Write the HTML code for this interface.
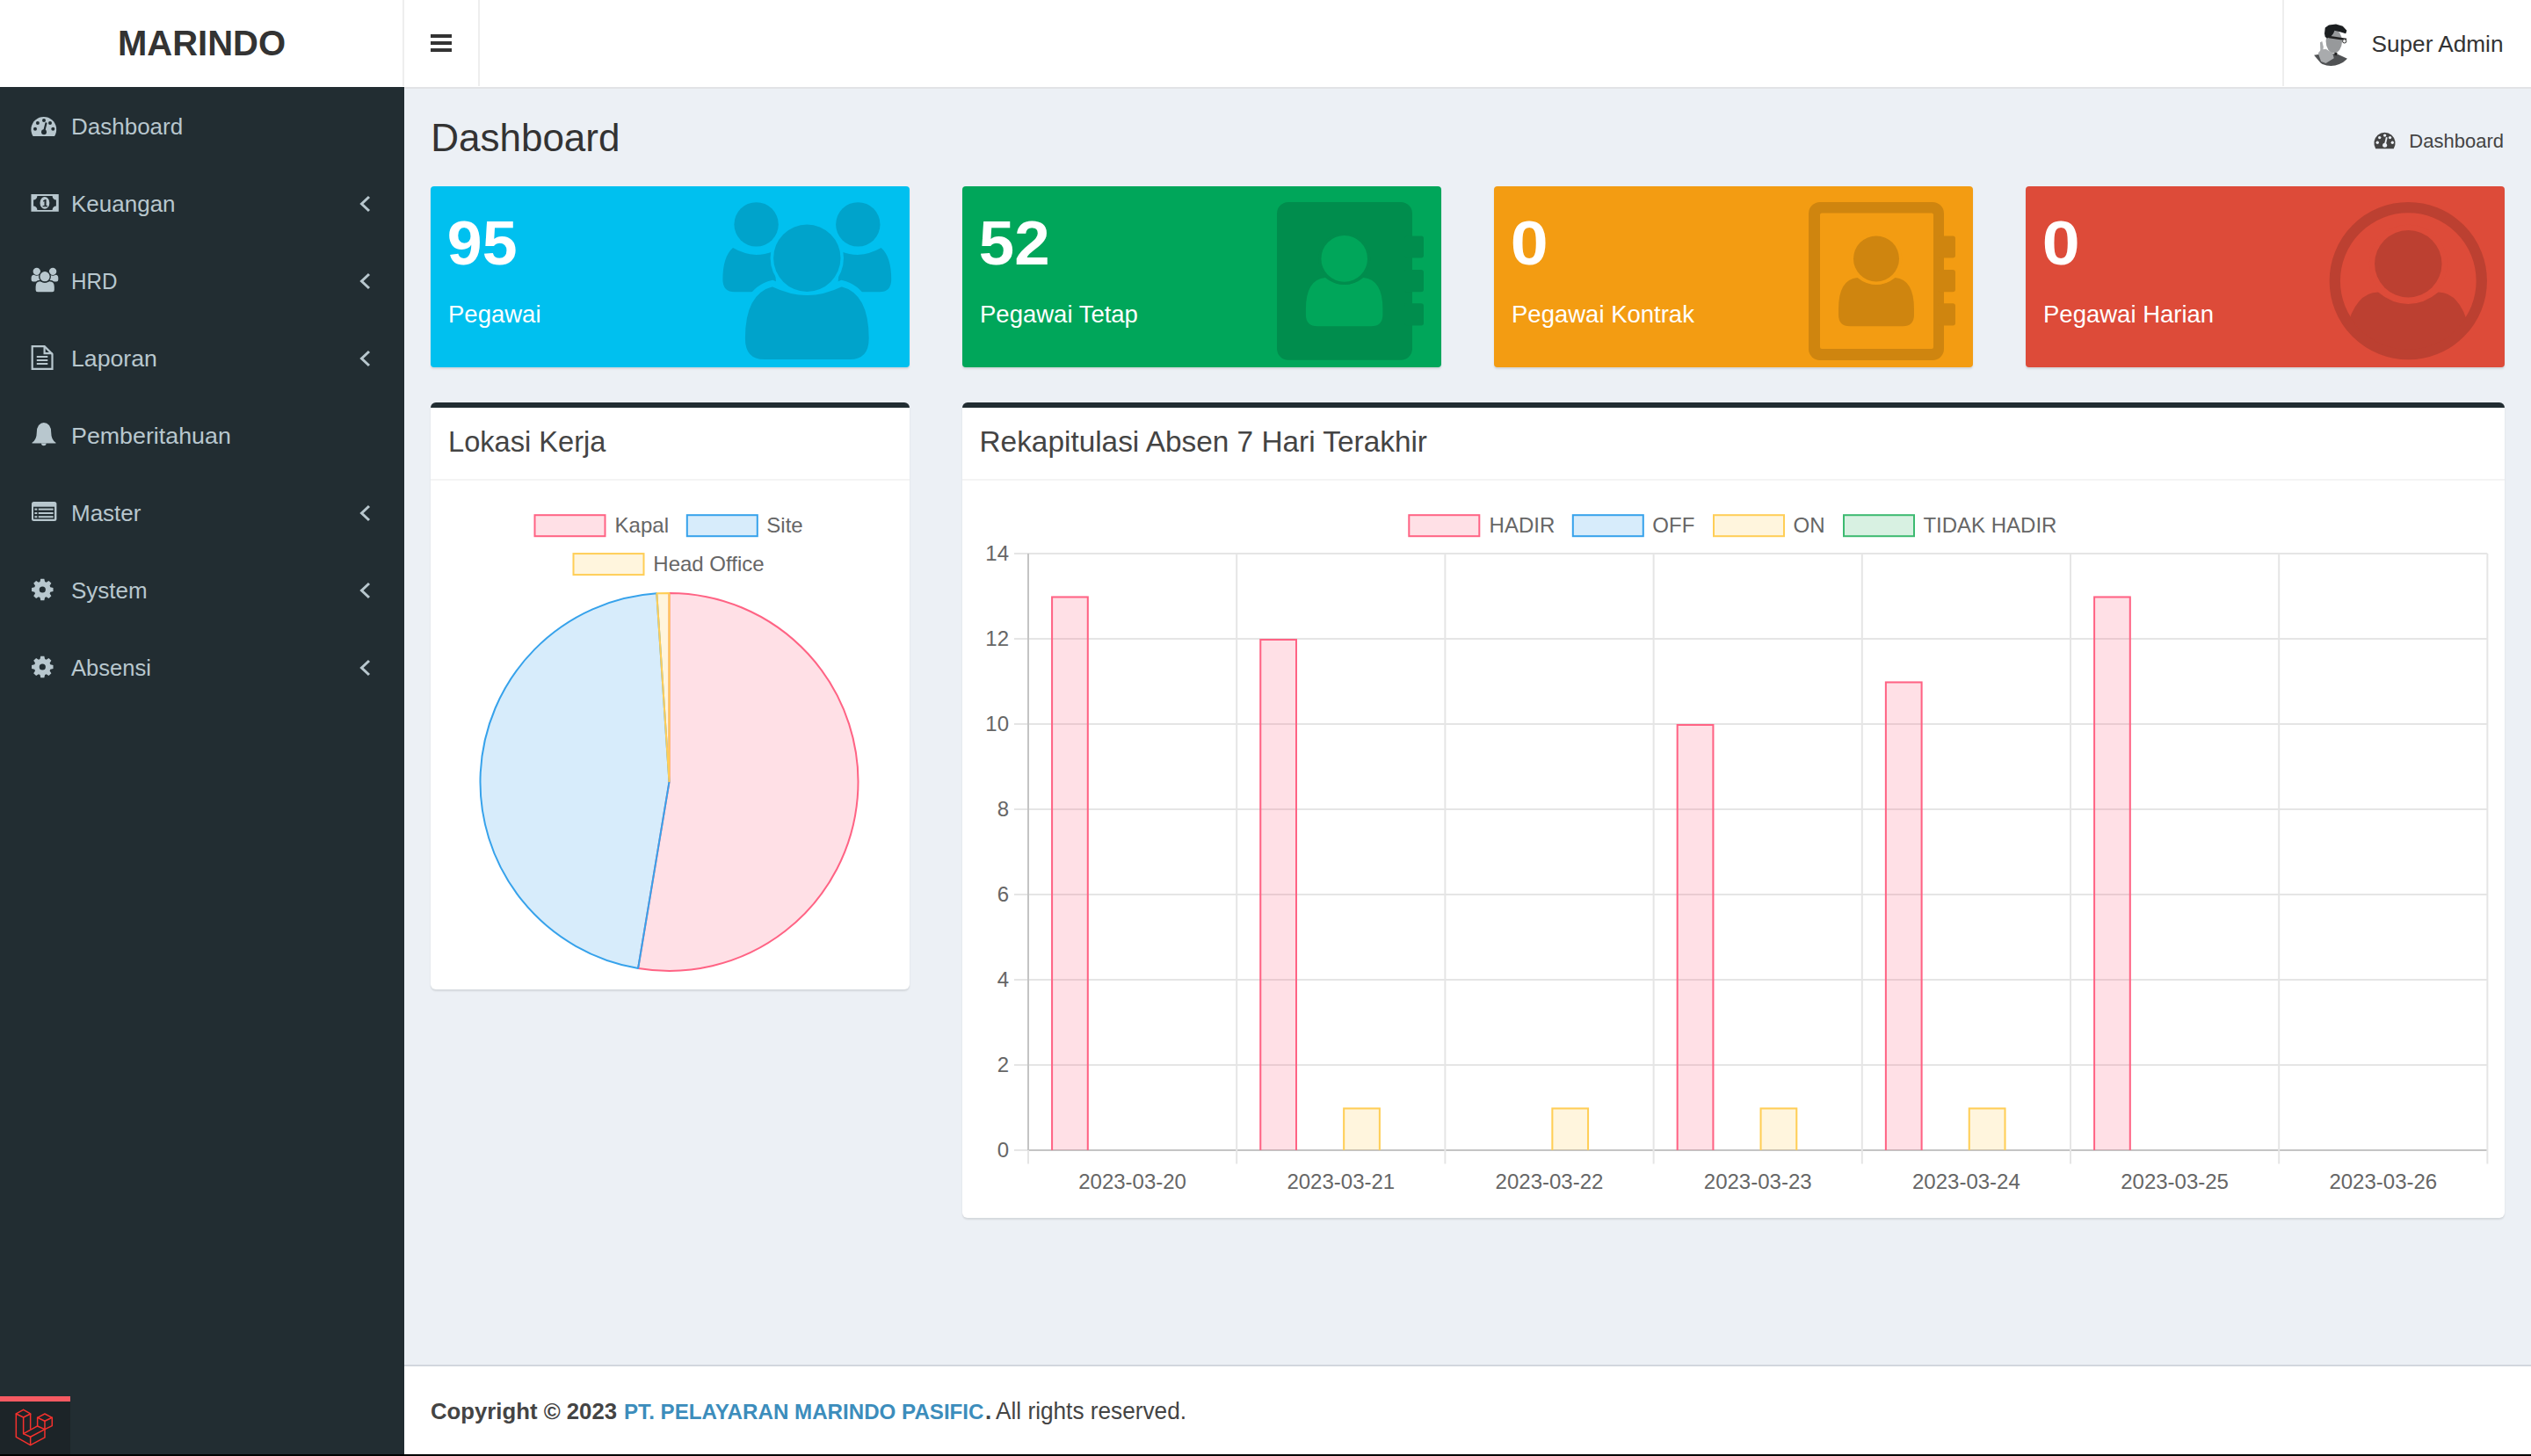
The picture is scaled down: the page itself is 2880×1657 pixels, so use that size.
<!DOCTYPE html>
<html><head><meta charset="utf-8"><title>Dashboard</title>
<style>
html,body{margin:0;padding:0;}
body{width:2880px;height:1657px;position:relative;overflow:hidden;background:#ecf0f5;font-family:"Liberation Sans", sans-serif;}
svg text{font-family:"Liberation Sans", sans-serif;}
</style></head><body>
<div style="position:absolute;left:0;top:0;width:2880px;height:99px;background:#fff"></div>
<div style="position:absolute;left:460px;top:99px;width:2420px;height:2px;background:#e2e3e6"></div>
<div style="position:absolute;left:458px;top:0;width:2px;height:98px;background:#eee"></div>
<div style="position:absolute;left:544px;top:0;width:2px;height:98px;background:#eee"></div>
<div style="position:absolute;left:2597px;top:0;width:2px;height:98px;background:#eee"></div>
<div style="position:absolute;left:0;top:99px;width:460px;height:1558px;background:#222d32"></div>
<div style="position:absolute;left:490px;top:212px;width:545px;height:206px;background:#00c0ef;border-radius:4px;box-shadow:0 2px 2px rgba(0,0,0,0.1)"></div><div style="position:absolute;left:1095px;top:212px;width:545px;height:206px;background:#00a65a;border-radius:4px;box-shadow:0 2px 2px rgba(0,0,0,0.1)"></div><div style="position:absolute;left:1700px;top:212px;width:545px;height:206px;background:#f39c12;border-radius:4px;box-shadow:0 2px 2px rgba(0,0,0,0.1)"></div><div style="position:absolute;left:2305px;top:212px;width:545px;height:206px;background:#dd4b39;border-radius:4px;box-shadow:0 2px 2px rgba(0,0,0,0.1)"></div><div style="position:absolute;left:490px;top:458px;width:545px;height:668px;background:#fff;border-radius:6px;box-shadow:0 2px 2px rgba(0,0,0,0.1);border-top:6px solid #222d32;box-sizing:border-box"></div><div style="position:absolute;left:490px;top:545px;width:545px;height:2px;background:#f4f4f4"></div><div style="position:absolute;left:1095px;top:458px;width:1755px;height:928px;background:#fff;border-radius:6px;box-shadow:0 2px 2px rgba(0,0,0,0.1);border-top:6px solid #222d32;box-sizing:border-box"></div><div style="position:absolute;left:1095px;top:545px;width:1755px;height:2px;background:#f4f4f4"></div><div style="position:absolute;left:460px;top:1553px;width:2420px;height:104px;background:#fff;border-top:2px solid #d2d6de;box-sizing:border-box"></div><div style="position:absolute;left:0;top:1655px;width:2880px;height:2px;background:#000"></div><div style="position:absolute;left:0;top:1589px;width:80px;height:6px;background:#f65a62"></div><div style="position:absolute;left:0;top:1595px;width:80px;height:60px;background:#1c2428"></div>
<svg style="position:absolute;left:0;top:0" width="2880" height="1657" viewBox="0 0 2880 1657">
<text x="229.50" y="62.80" font-size="40" fill="#333" font-weight="700" text-anchor="middle" >MARINDO</text>
<rect x="490" y="39" width="24" height="4" fill="#333"/>
<rect x="490" y="47" width="24" height="4" fill="#333"/>
<rect x="490" y="55" width="24" height="4" fill="#333"/>
<text x="2698.50" y="59.00" font-size="26.5" fill="#333" font-weight="400" text-anchor="start" textLength="150" lengthAdjust="spacingAndGlyphs">Super Admin</text>
<text x="81.00" y="153.00" font-size="26" fill="#b8c7ce" font-weight="400" text-anchor="start" >Dashboard</text>
<text x="81.00" y="241.00" font-size="26" fill="#b8c7ce" font-weight="400" text-anchor="start" >Keuangan</text>
<polyline points="420,224 411.5,232 420,240" fill="none" stroke="#b8c7ce" stroke-width="3"/>
<text x="81.00" y="329.00" font-size="26" fill="#b8c7ce" font-weight="400" text-anchor="start" textLength="52.5" lengthAdjust="spacingAndGlyphs">HRD</text>
<polyline points="420,312 411.5,320 420,328" fill="none" stroke="#b8c7ce" stroke-width="3"/>
<text x="81.00" y="417.00" font-size="26" fill="#b8c7ce" font-weight="400" text-anchor="start" textLength="97.9" lengthAdjust="spacingAndGlyphs">Laporan</text>
<polyline points="420,400 411.5,408 420,416" fill="none" stroke="#b8c7ce" stroke-width="3"/>
<text x="81.00" y="505.00" font-size="26" fill="#b8c7ce" font-weight="400" text-anchor="start" textLength="181.8" lengthAdjust="spacingAndGlyphs">Pemberitahuan</text>
<text x="81.00" y="593.00" font-size="26" fill="#b8c7ce" font-weight="400" text-anchor="start" >Master</text>
<polyline points="420,576 411.5,584 420,592" fill="none" stroke="#b8c7ce" stroke-width="3"/>
<text x="81.00" y="681.00" font-size="26" fill="#b8c7ce" font-weight="400" text-anchor="start" >System</text>
<polyline points="420,664 411.5,672 420,680" fill="none" stroke="#b8c7ce" stroke-width="3"/>
<text x="81.00" y="769.00" font-size="26" fill="#b8c7ce" font-weight="400" text-anchor="start" textLength="91.0" lengthAdjust="spacingAndGlyphs">Absensi</text>
<polyline points="420,752 411.5,760 420,768" fill="none" stroke="#b8c7ce" stroke-width="3"/>
<text x="490.20" y="172.00" font-size="44" fill="#333" font-weight="400" text-anchor="start" >Dashboard</text>
<text x="2849.00" y="167.50" font-size="22" fill="#444" font-weight="400" text-anchor="end" >Dashboard</text>
<text x="508.80" y="300.50" font-size="70" fill="#fff" font-weight="700" text-anchor="start" textLength="79.7" lengthAdjust="spacingAndGlyphs">95</text>
<text x="510.00" y="366.70" font-size="27.5" fill="#fff" font-weight="400" text-anchor="start" >Pegawai</text>
<text x="1113.80" y="300.50" font-size="70" fill="#fff" font-weight="700" text-anchor="start" textLength="80.8" lengthAdjust="spacingAndGlyphs">52</text>
<text x="1115.00" y="366.70" font-size="27.5" fill="#fff" font-weight="400" text-anchor="start" >Pegawai Tetap</text>
<text x="1718.80" y="300.50" font-size="70" fill="#fff" font-weight="700" text-anchor="start" textLength="42.9" lengthAdjust="spacingAndGlyphs">0</text>
<text x="1720.00" y="366.70" font-size="27.5" fill="#fff" font-weight="400" text-anchor="start" >Pegawai Kontrak</text>
<text x="2323.80" y="300.50" font-size="70" fill="#fff" font-weight="700" text-anchor="start" textLength="42.9" lengthAdjust="spacingAndGlyphs">0</text>
<text x="2325.00" y="366.70" font-size="27.5" fill="#fff" font-weight="400" text-anchor="start" >Pegawai Harian</text>
<text x="510.00" y="514.00" font-size="32.3" fill="#444" font-weight="400" text-anchor="start" textLength="179.5" lengthAdjust="spacingAndGlyphs">Lokasi Kerja</text>
<text x="1114.50" y="514.20" font-size="33.2" fill="#444" font-weight="400" text-anchor="start" textLength="509.5" lengthAdjust="spacingAndGlyphs">Rekapitulasi Absen 7 Hari Terakhir</text>
<text x="490.00" y="1615.20" font-size="26.5" fill="#444" font-weight="700" text-anchor="start" textLength="212" lengthAdjust="spacingAndGlyphs">Copyright © 2023</text>
<text x="710.00" y="1615.20" font-size="24.5" fill="#3c8dbc" font-weight="700" text-anchor="start" textLength="409.5" lengthAdjust="spacingAndGlyphs">PT. PELAYARAN MARINDO PASIFIC</text>
<text x="1121.00" y="1615.20" font-size="26" fill="#444" font-weight="700" text-anchor="start" >.</text>
<text x="1133.00" y="1615.20" font-size="27" fill="#444" font-weight="400" text-anchor="start" textLength="217" lengthAdjust="spacingAndGlyphs">All rights reserved.</text>
<g transform="translate(49.8,147.3) scale(1)"><path d="M-12.2 7.7 A14.4 14.4 0 1 1 12.2 7.7 Z" fill="#b8c7ce"/><circle cx="0.2" cy="-10.4" r="2" fill="#222d32"/><circle cx="-6.9" cy="-7.4" r="2" fill="#222d32"/><circle cx="7.2" cy="-7.4" r="2" fill="#222d32"/><circle cx="-9.8" cy="-0.6" r="2" fill="#222d32"/><circle cx="10.5" cy="-0.6" r="2" fill="#222d32"/><circle cx="0.2" cy="3" r="3" fill="#222d32"/><line x1="0.2" y1="3" x2="2.8" y2="-7.8" stroke="#222d32" stroke-width="2.2"/></g>
<g transform="translate(2713.5,162.8) scale(0.84)"><path d="M-12.2 7.7 A14.4 14.4 0 1 1 12.2 7.7 Z" fill="#444"/><circle cx="0.2" cy="-10.4" r="2" fill="#ecf0f5"/><circle cx="-6.9" cy="-7.4" r="2" fill="#ecf0f5"/><circle cx="7.2" cy="-7.4" r="2" fill="#ecf0f5"/><circle cx="-9.8" cy="-0.6" r="2" fill="#ecf0f5"/><circle cx="10.5" cy="-0.6" r="2" fill="#ecf0f5"/><circle cx="0.2" cy="3" r="3" fill="#ecf0f5"/><line x1="0.2" y1="3" x2="2.8" y2="-7.8" stroke="#ecf0f5" stroke-width="2.2"/></g>
<rect x="35.45" y="221" width="31.3" height="19.8" fill="#b8c7ce"/>
<path d="M42.4 223.1 H59.6 A4.3 4.3 0 0 0 63.9 227.4 V234.6 A4.3 4.3 0 0 0 59.6 238.9 H42.4 A4.3 4.3 0 0 0 38.1 234.6 V227.4 A4.3 4.3 0 0 0 42.4 223.1 Z" fill="#222d32"/>
<ellipse cx="50.9" cy="230.9" rx="5.4" ry="6.8" fill="#b8c7ce"/>
<path d="M49 228.6 L51.2 227 H52.6 V234 H54 V235.3 H48.6 V234 H50.5 V229 L49.4 229.7 Z" fill="#222d32"/>
<circle cx="41.8" cy="308.9" r="4.2" fill="#b8c7ce"/><circle cx="60.1" cy="308.9" r="4.2" fill="#b8c7ce"/>
<path d="M35.6 318.3 V316.5 Q35.6 312.8 38.6 312.8 Q41.8 314.6 45 312.8 L46 320.5 H37.8 Q35.6 320.5 35.6 318.3 Z" fill="#b8c7ce"/>
<path d="M66.3 318.3 V316.5 Q66.3 312.8 63.3 312.8 Q60.1 314.6 56.9 312.8 L56 320.5 H64.1 Q66.3 320.5 66.3 318.3 Z" fill="#b8c7ce"/>
<path d="M39.9 330 V326.5 Q39.9 319.5 45.5 319.5 Q51 322.5 56.5 319.5 Q62.5 319.5 62.5 326.5 V330 Q62.5 333 59.5 333 H42.9 Q39.9 333 39.9 330 Z" fill="#b8c7ce" stroke="#222d32" stroke-width="1.4"/>
<circle cx="51" cy="314.7" r="6.3" fill="#b8c7ce" stroke="#222d32" stroke-width="1.4"/>
<path d="M36.7 394.1 H50.6 L59.5 403 V419.9 H36.7 Z" fill="none" stroke="#b8c7ce" stroke-width="2.2"/>
<path d="M50.6 394.1 V402.2 H59.5" fill="none" stroke="#b8c7ce" stroke-width="2.2"/>
<rect x="41.8" y="405" width="12.5" height="2" fill="#b8c7ce"/>
<rect x="41.8" y="409" width="12.5" height="2" fill="#b8c7ce"/>
<rect x="41.8" y="413" width="12.5" height="2" fill="#b8c7ce"/>
<path d="M49.8 481 Q53.5 481 56 484 Q58.2 487 58.2 492 Q58.2 500.5 63.5 503.7 V504.5 H36.5 V503.7 Q41.8 500.5 41.8 492 Q41.8 487 44 484 Q46.5 481 49.8 481 Z" fill="#b8c7ce"/>
<path d="M47 504.5 A2.8 2.8 0 0 0 52.6 504.5 Z" fill="#b8c7ce"/>
<rect x="36" y="571" width="28.4" height="22" rx="2.5" fill="#b8c7ce"/>
<rect x="38" y="576.7" width="24" height="14" fill="#222d32"/>
<rect x="39.4" y="578.6" width="2.9" height="2" fill="#b8c7ce"/><rect x="43.75" y="578.6" width="16.9" height="2" fill="#b8c7ce"/>
<rect x="39.4" y="583" width="2.9" height="2" fill="#b8c7ce"/><rect x="43.75" y="583" width="16.9" height="2" fill="#b8c7ce"/>
<rect x="39.4" y="587.2" width="2.9" height="2" fill="#b8c7ce"/><rect x="43.75" y="587.2" width="16.9" height="2" fill="#b8c7ce"/>
<path d="M57.28 668.22 L60.53 668.93 L60.53 673.07 L57.28 673.78 L56.61 675.39 L58.41 678.18 L55.48 681.11 L52.69 679.31 L51.08 679.98 L50.37 683.23 L46.23 683.23 L45.52 679.98 L43.91 679.31 L41.12 681.11 L38.19 678.18 L39.99 675.39 L39.32 673.78 L36.07 673.07 L36.07 668.93 L39.32 668.22 L39.99 666.61 L38.19 663.82 L41.12 660.89 L43.91 662.69 L45.52 662.02 L46.23 658.77 L50.37 658.77 L51.08 662.02 L52.69 662.69 L55.48 660.89 L58.41 663.82 L56.61 666.61 Z" fill="#b8c7ce"/><circle cx="48.3" cy="671" r="3.6" fill="#222d32"/>
<path d="M57.28 756.22 L60.53 756.93 L60.53 761.07 L57.28 761.78 L56.61 763.39 L58.41 766.18 L55.48 769.11 L52.69 767.31 L51.08 767.98 L50.37 771.23 L46.23 771.23 L45.52 767.98 L43.91 767.31 L41.12 769.11 L38.19 766.18 L39.99 763.39 L39.32 761.78 L36.07 761.07 L36.07 756.93 L39.32 756.22 L39.99 754.61 L38.19 751.82 L41.12 748.89 L43.91 750.69 L45.52 750.02 L46.23 746.77 L50.37 746.77 L51.08 750.02 L52.69 750.69 L55.48 748.89 L58.41 751.82 L56.61 754.61 Z" fill="#b8c7ce"/><circle cx="48.3" cy="759" r="3.6" fill="#222d32"/>
<defs><clipPath id="avc"><circle cx="2652.3" cy="50" r="25"/></clipPath></defs>
<g clip-path="url(#avc)"><path d="M2633.08 62.77 L2646.54 60.46 L2659.62 61.62 L2671.54 67.00 L2663.46 75.85 L2644.23 75.85 Z" fill="#505254"/><path d="M2637.69 60.46 L2641.15 56.62 L2646.54 55.85 L2654.23 60.46 L2655.77 66.23 L2646.54 72.00 L2641.15 70.08 Z" fill="#a9abad"/><path d="M2640.00 48.15 L2642.31 47.00 L2643.85 53.54 L2643.08 58.54 L2640.38 58.54 Z" fill="#a9abad"/><ellipse cx="2655.8" cy="47" rx="9.2" ry="13.5" fill="#97999b"/><path d="M2645.00 38.15 L2645.77 31.62 L2650.00 28.54 L2658.08 27.38 L2665.77 29.69 L2670.38 34.69 L2669.23 38.15 L2663.46 36.62 L2656.54 34.69 L2655.00 38.15 L2651.92 42.00 L2648.08 43.54 L2645.77 42.00 Z" fill="#1c1f21"/><line x1="2650" y1="42" x2="2670" y2="45.1" stroke="#222" stroke-width="2.5"/><circle cx="2667.7" cy="46.8" r="2.2" fill="#eee" stroke="#333" stroke-width="1"/><path d="M2656.54 59.69 L2659.62 60.08 L2658.85 63.15 L2656.15 62.38 Z" fill="#222"/></g>
<circle cx="860.6" cy="255.4" r="25.2" fill="#00a3cb"/><circle cx="976.3" cy="255.4" r="25.2" fill="#00a3cb"/>
<path d="M822.4 318 Q822.4 292 834 282 Q846 289 860.6 290 Q870 290 880 286 L884 332.3 H836 Q822.4 332.3 822.4 318 Z" fill="#00a3cb"/>
<path d="M1014.2 318 Q1014.2 292 1002.6 282 Q990.6 289 976 290 Q966.6 290 956.6 286 L952.6 332.3 H1000.6 Q1014.2 332.3 1014.2 318 Z" fill="#00a3cb"/>
<path d="M844.4 385 Q844.4 331 879 322.5 Q900 332.5 918.3 332.5 Q936.6 332.5 957.6 322.5 Q992.2 331 992.2 385 Q992.2 412.5 967 412.5 H869.6 Q844.4 412.5 844.4 385 Z" fill="#00a3cb" stroke="#00c0ef" stroke-width="7"/>
<circle cx="918.3" cy="293.7" r="41.7" fill="#00c0ef"/><circle cx="918.3" cy="293.7" r="38.2" fill="#00a3cb"/>
<rect x="1453" y="230" width="154" height="179.8" rx="13" fill="#008d4d"/>
<rect x="1598" y="268.4" width="22" height="25.2" rx="3" fill="#008d4d"/>
<rect x="1598" y="307" width="22" height="25.2" rx="3" fill="#008d4d"/>
<rect x="1598" y="345.3" width="22" height="25.2" rx="3" fill="#008d4d"/>
<path d="M1485.9 352 Q1485.9 318 1508 316 Q1518 324 1529.7 324 Q1541.4 324 1551.4 316 Q1573.4 318 1573.4 352 V358 Q1573.4 371.3 1560 371.3 H1499.3 Q1485.9 371.3 1485.9 358 Z" fill="#00a65a"/>
<circle cx="1529.7" cy="294.4" r="29.5" fill="#008d4d"/><circle cx="1529.7" cy="294.4" r="26.3" fill="#00a65a"/>
<rect x="2058" y="230" width="154" height="180" rx="13" fill="#cf850f"/>
<rect x="2071" y="242.5" width="129" height="154.5" rx="2" fill="#f39c12"/>
<rect x="2205" y="268.4" width="20" height="25.2" rx="3" fill="#cf850f"/>
<rect x="2205" y="307" width="20" height="25.2" rx="3" fill="#cf850f"/>
<rect x="2205" y="345.3" width="20" height="25.2" rx="3" fill="#cf850f"/>
<path d="M2092 352 Q2092 318 2113.5 316 Q2123.5 324 2135 324 Q2146.5 324 2156.5 316 Q2178 318 2178 352 V358 Q2178 371.3 2165 371.3 H2105 Q2092 371.3 2092 358 Z" fill="#cf850f"/>
<circle cx="2135" cy="294.4" r="29.3" fill="#f39c12"/><circle cx="2135" cy="294.4" r="26" fill="#cf850f"/>
<circle cx="2740.3" cy="319.7" r="83.5" fill="none" stroke="#bc4031" stroke-width="12.3"/>
<defs><clipPath id="ucc"><circle cx="2740.3" cy="319.7" r="78"/></clipPath></defs>
<path clip-path="url(#ucc)" d="M2670 420 V375 Q2680 333 2706 332.6 Q2722 346 2740.3 346 Q2758.6 346 2774.6 332.6 Q2800 333 2810 375 V420 Z" fill="#bc4031"/>
<circle cx="2740.3" cy="300.2" r="44.5" fill="#dd4b39"/><circle cx="2740.3" cy="300.2" r="38.2" fill="#bc4031"/>
<g fill="none" stroke="#f4312d" stroke-width="1.5" stroke-linejoin="round" stroke-linecap="round"><path d="M26.65 1604.30 L34.64 1608.97 L26.65 1612.96 L18.32 1608.97 L26.65 1604.30"/><path d="M18.32 1608.97 L18.32 1635.28 L34.64 1644.61 L50.97 1635.95 L50.97 1626.62"/><path d="M26.65 1612.96 L26.65 1631.62 L34.64 1635.28 L50.97 1626.62"/><path d="M34.64 1609.30 L34.64 1625.96"/><path d="M26.65 1631.62 L42.64 1622.96"/><path d="M34.64 1635.28 L34.64 1644.61"/><path d="M50.97 1608.97 L59.29 1613.30 L50.97 1617.30 L42.64 1613.30 L50.97 1608.97"/><path d="M42.64 1613.30 L42.64 1622.96 L50.97 1626.62 L59.29 1622.62 L59.29 1613.30"/><path d="M50.97 1617.30 L50.97 1626.62"/></g>
<rect x="608.5" y="586.2" width="80" height="24" fill="rgba(255,99,132,0.2)" stroke="rgb(255,99,132)" stroke-width="2"/>
<text x="699.60" y="606.30" font-size="24" fill="#666" font-weight="400" text-anchor="start" >Kapal</text>
<rect x="781.8" y="586.2" width="80" height="24" fill="rgba(54,162,235,0.2)" stroke="rgb(54,162,235)" stroke-width="2"/>
<text x="872.30" y="606.30" font-size="24" fill="#666" font-weight="400" text-anchor="start" >Site</text>
<rect x="652.5" y="630.1" width="80" height="24" fill="rgba(255,206,86,0.2)" stroke="rgb(255,206,86)" stroke-width="2"/>
<text x="743.30" y="650.20" font-size="24" fill="#666" font-weight="400" text-anchor="start" >Head Office</text>
<path d="M761.5 889.9 L761.50 674.90 A215 215 0 1 1 726.11 1101.97 Z" fill="rgba(255,99,132,0.2)" stroke="rgb(255,99,132)" stroke-width="2" stroke-linejoin="bevel"/>
<path d="M761.5 889.9 L726.11 1101.97 A215 215 0 0 1 747.29 675.37 Z" fill="rgba(54,162,235,0.2)" stroke="rgb(54,162,235)" stroke-width="2" stroke-linejoin="bevel"/>
<path d="M761.5 889.9 L747.29 675.37 A215 215 0 0 1 761.50 674.90 Z" fill="rgba(255,206,86,0.2)" stroke="rgb(255,206,86)" stroke-width="2" stroke-linejoin="bevel"/>
<rect x="1603.3" y="586.2" width="80" height="24" fill="rgba(255,99,132,0.2)" stroke="rgb(255,99,132)" stroke-width="2"/>
<text x="1694.60" y="606.30" font-size="24" fill="#666" font-weight="400" text-anchor="start" >HADIR</text>
<rect x="1789.8" y="586.2" width="80" height="24" fill="rgba(54,162,235,0.2)" stroke="rgb(54,162,235)" stroke-width="2"/>
<text x="1880.30" y="606.30" font-size="24" fill="#666" font-weight="400" text-anchor="start" >OFF</text>
<rect x="1950" y="586.2" width="80" height="24" fill="rgba(255,206,86,0.2)" stroke="rgb(255,206,86)" stroke-width="2"/>
<text x="2040.50" y="606.30" font-size="24" fill="#666" font-weight="400" text-anchor="start" >ON</text>
<rect x="2098" y="586.2" width="80" height="24" fill="rgba(60,186,112,0.2)" stroke="rgb(60,186,112)" stroke-width="2"/>
<text x="2188.40" y="606.30" font-size="24" fill="#666" font-weight="400" text-anchor="start" >TIDAK HADIR</text>
<line x1="1154" y1="1308.9" x2="1170" y2="1308.9" stroke="#e5e5e5" stroke-width="2"/>
<line x1="1170" y1="1308.9" x2="2830.4" y2="1308.9" stroke="#c4c4c4" stroke-width="2"/>
<text x="1148.00" y="1316.80" font-size="24" fill="#666" font-weight="400" text-anchor="end" >0</text>
<line x1="1154" y1="1211.90" x2="2830.4" y2="1211.90" stroke="#e5e5e5" stroke-width="2"/>
<text x="1148.00" y="1219.80" font-size="24" fill="#666" font-weight="400" text-anchor="end" >2</text>
<line x1="1154" y1="1114.90" x2="2830.4" y2="1114.90" stroke="#e5e5e5" stroke-width="2"/>
<text x="1148.00" y="1122.80" font-size="24" fill="#666" font-weight="400" text-anchor="end" >4</text>
<line x1="1154" y1="1017.90" x2="2830.4" y2="1017.90" stroke="#e5e5e5" stroke-width="2"/>
<text x="1148.00" y="1025.80" font-size="24" fill="#666" font-weight="400" text-anchor="end" >6</text>
<line x1="1154" y1="920.90" x2="2830.4" y2="920.90" stroke="#e5e5e5" stroke-width="2"/>
<text x="1148.00" y="928.80" font-size="24" fill="#666" font-weight="400" text-anchor="end" >8</text>
<line x1="1154" y1="823.90" x2="2830.4" y2="823.90" stroke="#e5e5e5" stroke-width="2"/>
<text x="1148.00" y="831.80" font-size="24" fill="#666" font-weight="400" text-anchor="end" >10</text>
<line x1="1154" y1="726.90" x2="2830.4" y2="726.90" stroke="#e5e5e5" stroke-width="2"/>
<text x="1148.00" y="734.80" font-size="24" fill="#666" font-weight="400" text-anchor="end" >12</text>
<line x1="1154" y1="629.90" x2="2830.4" y2="629.90" stroke="#e5e5e5" stroke-width="2"/>
<text x="1148.00" y="637.80" font-size="24" fill="#666" font-weight="400" text-anchor="end" >14</text>
<line x1="1170.0" y1="629.9" x2="1170.0" y2="1308.9" stroke="#c4c4c4" stroke-width="2"/>
<line x1="1170.0" y1="1308.9" x2="1170.0" y2="1324.5" stroke="#e5e5e5" stroke-width="2"/>
<line x1="1407.20" y1="629.9" x2="1407.20" y2="1324.5" stroke="#e5e5e5" stroke-width="2"/>
<line x1="1644.40" y1="629.9" x2="1644.40" y2="1324.5" stroke="#e5e5e5" stroke-width="2"/>
<line x1="1881.60" y1="629.9" x2="1881.60" y2="1324.5" stroke="#e5e5e5" stroke-width="2"/>
<line x1="2118.80" y1="629.9" x2="2118.80" y2="1324.5" stroke="#e5e5e5" stroke-width="2"/>
<line x1="2356.00" y1="629.9" x2="2356.00" y2="1324.5" stroke="#e5e5e5" stroke-width="2"/>
<line x1="2593.20" y1="629.9" x2="2593.20" y2="1324.5" stroke="#e5e5e5" stroke-width="2"/>
<line x1="2830.40" y1="629.9" x2="2830.40" y2="1324.5" stroke="#e5e5e5" stroke-width="2"/>
<text x="1288.60" y="1352.90" font-size="24" fill="#666" font-weight="400" text-anchor="middle" >2023-03-20</text>
<text x="1525.80" y="1352.90" font-size="24" fill="#666" font-weight="400" text-anchor="middle" >2023-03-21</text>
<text x="1763.00" y="1352.90" font-size="24" fill="#666" font-weight="400" text-anchor="middle" >2023-03-22</text>
<text x="2000.20" y="1352.90" font-size="24" fill="#666" font-weight="400" text-anchor="middle" >2023-03-23</text>
<text x="2237.40" y="1352.90" font-size="24" fill="#666" font-weight="400" text-anchor="middle" >2023-03-24</text>
<text x="2474.60" y="1352.90" font-size="24" fill="#666" font-weight="400" text-anchor="middle" >2023-03-25</text>
<text x="2711.80" y="1352.90" font-size="24" fill="#666" font-weight="400" text-anchor="middle" >2023-03-26</text>
<rect x="1196.09" y="678.40" width="42.70" height="630.50" fill="rgba(255,99,132,0.2)"/>
<path d="M1197.09 1308.9 V679.40 H1237.79 V1308.9" fill="none" stroke="rgb(255,99,132)" stroke-width="2"/>
<rect x="1433.29" y="726.90" width="42.70" height="582.00" fill="rgba(255,99,132,0.2)"/>
<path d="M1434.29 1308.9 V727.90 H1474.99 V1308.9" fill="none" stroke="rgb(255,99,132)" stroke-width="2"/>
<rect x="1907.69" y="823.90" width="42.70" height="485.00" fill="rgba(255,99,132,0.2)"/>
<path d="M1908.69 1308.9 V824.90 H1949.39 V1308.9" fill="none" stroke="rgb(255,99,132)" stroke-width="2"/>
<rect x="2144.89" y="775.40" width="42.70" height="533.50" fill="rgba(255,99,132,0.2)"/>
<path d="M2145.89 1308.9 V776.40 H2186.59 V1308.9" fill="none" stroke="rgb(255,99,132)" stroke-width="2"/>
<rect x="2382.09" y="678.40" width="42.70" height="630.50" fill="rgba(255,99,132,0.2)"/>
<path d="M2383.09 1308.9 V679.40 H2423.79 V1308.9" fill="none" stroke="rgb(255,99,132)" stroke-width="2"/>
<rect x="1528.17" y="1260.40" width="42.70" height="48.50" fill="rgba(255,206,86,0.2)"/>
<path d="M1529.17 1308.9 V1261.40 H1569.87 V1308.9" fill="none" stroke="rgb(255,206,86)" stroke-width="2"/>
<rect x="1765.37" y="1260.40" width="42.70" height="48.50" fill="rgba(255,206,86,0.2)"/>
<path d="M1766.37 1308.9 V1261.40 H1807.07 V1308.9" fill="none" stroke="rgb(255,206,86)" stroke-width="2"/>
<rect x="2002.57" y="1260.40" width="42.70" height="48.50" fill="rgba(255,206,86,0.2)"/>
<path d="M2003.57 1308.9 V1261.40 H2044.27 V1308.9" fill="none" stroke="rgb(255,206,86)" stroke-width="2"/>
<rect x="2239.77" y="1260.40" width="42.70" height="48.50" fill="rgba(255,206,86,0.2)"/>
<path d="M2240.77 1308.9 V1261.40 H2281.47 V1308.9" fill="none" stroke="rgb(255,206,86)" stroke-width="2"/>
</svg>
<script>(function(){var w=window.innerWidth;if(w&&Math.abs(w-2880)>2){document.body.style.zoom=(w/2880);}})();</script>
</body></html>
